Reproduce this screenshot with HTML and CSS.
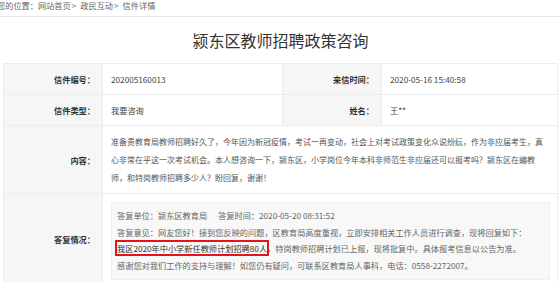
FILE: index.html
```html
<!DOCTYPE html>
<html lang="zh-CN">
<head>
    <meta charset="UTF-8">
    <meta name="viewport" content="width=device-width, initial-scale=1.0">
    <title>颍东区教师招聘政策咨询</title>
    <link rel="stylesheet" href="styles.css">
</head>
<body>
    <div class="crumb">您的位置：网站首页<span class="sep">&gt;</span>政民互动<span class="sep">&gt;</span>信件详情</div>

    <div class="letter">
        <h1>颍东区教师招聘政策咨询</h1>

        <table class="info">
            <colgroup>
                <col class="c-label">
                <col class="c-value">
                <col class="c-label">
                <col>
            </colgroup>
            <tr>
                <th>信件编号：</th>
                <td>202005160013</td>
                <th>来信时间：</th>
                <td>2020-05-16 15:40:58</td>
            </tr>
            <tr>
                <th>信件类型：</th>
                <td>我要咨询</td>
                <th>姓名：</th>
                <td>王**</td>
            </tr>
            <tr>
                <th>内容：</th>
                <td colspan="3" class="content">准备贵教育局教师招聘好久了，今年因为新冠疫情，考试一再变动，社会上对考试政策变化众说纷纭，作为非应届考生，真心非常在乎这一次考试机会。本人想咨询一下，颍东区，小学岗位今年本科非师范生非应届还可以报考吗？颍东区在编教<wbr>师，和特岗教师招聘多少人？盼回复，谢谢！</td>
            </tr>
            <tr>
                <th>答复情况：</th>
                <td colspan="3" class="reply-cell">
                    <div class="reply">
                        <p>答复单位：颍东区教育局<span class="gap"></span>答复时间：2020-05-20 08:31:52</p>
                        <p>答复意见：网友您好！接到您反映的问题，区教育局高度重视，立即安排相关工作人员进行调查，现将回复如下：</p>
                        <p><span class="mark">我区2020年中小学新任教师计划招聘80人</span>，特岗教师招聘计划已上报，现将批复中。具体报考信息以公告为准。</p>
                        <p>感谢您对我们工作的支持与理解！如您仍有疑问，可联系区教育局人事科，电话：0558-2272007。</p>
                    </div>
                </td>
            </tr>
        </table>
    </div>
</body>
</html>
```

FILE: styles.css
```css
* {
    box-sizing: border-box;
    margin: 0;
    padding: 0;
}

body {
    font-family: "Noto Sans CJK SC", "Noto Sans", sans-serif;
    font-size: 8.2px;
    color: #555;
    background: #fff;
    overflow: hidden;
}

.crumb {
    margin-top: -6px;
    line-height: 22px;
    text-indent: -3px;
    color: #666;
    border-bottom: 1px solid #e6e6e6;
}

.crumb .sep {
    display: inline-block;
    padding: 0 4px;
    color: #888;
}

.letter {
    padding: 0 2px 0 3px;
}

h1 {
    font-size: 16px;
    font-weight: normal;
    color: #333;
    text-align: center;
    line-height: 46px;
}

.info {
    width: 100%;
    border-collapse: collapse;
    table-layout: fixed;
}

.c-label {
    width: 99px;
}

.c-value {
    width: 180px;
}

.info th,
.info td {
    border: 1px solid #ececec;
    height: 31px;
    line-height: 18px;
    vertical-align: middle;
}

.info th {
    background: #f6f6f6;
    color: #333;
    font-weight: bold;
    text-align: right;
    padding-right: 7px;
}

.info td {
    padding: 0 8px;
    color: #444;
}

.info td.content {
    padding: 7px 10px 6px 8px;
    font-size: 8px;
    color: #555;
}

.info td.reply-cell {
    padding: 8px 7px 4px 8px;
}

.reply {
    background: #f8f8f8;
    border: 1px solid #efefef;
    padding: 4px 5px 5px 5px;
    color: #666;
    line-height: 16.7px;
}

.gap {
    display: inline-block;
    width: 11px;
}

.mark {
    color: #333;
    outline: 2px solid #e4141b;
    outline-offset: 0;
}
```
